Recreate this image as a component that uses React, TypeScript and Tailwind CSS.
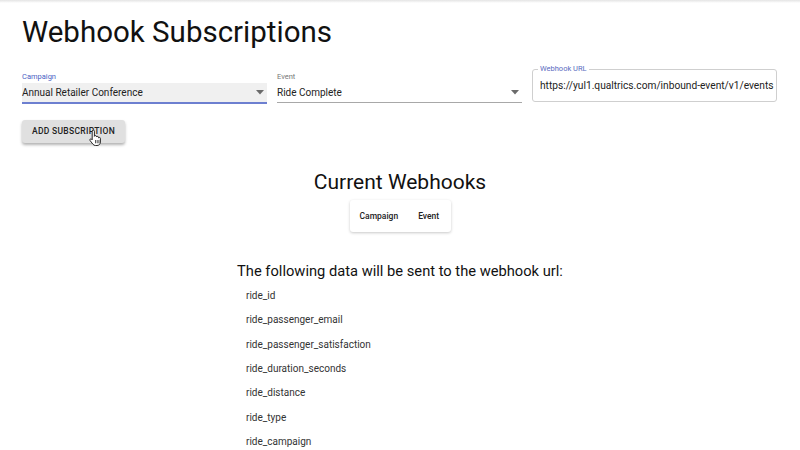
import React from "react";

const fields = [
  "ride_id",
  "ride_passenger_email",
  "ride_passenger_satisfaction",
  "ride_duration_seconds",
  "ride_distance",
  "ride_type",
  "ride_campaign",
];

function Arrow() {
  return (
    <svg width="8" height="5" viewBox="0 0 8 5" className="shrink-0">
      <path d="M0 0 L8 0 L4 4.5 Z" fill="#6b6b6b" />
    </svg>
  );
}

function HandCursor() {
  return (
    <svg
      width="13"
      height="16"
      viewBox="0 0 13 16"
      className="absolute left-[89px] top-[130px]"
    >
      <path
        d="M3.2 1.2c0-.7.5-1.1 1.1-1.1s1.1.4 1.1 1.1V6.3c.2-.5.6-.7 1.1-.7.6 0 1 .4 1 1v.4c.2-.4.6-.6 1-.6.6 0 1 .4 1 1v.5c.2-.3.5-.5.9-.5.6 0 1 .4 1 1V12c0 2-1.4 3.5-3.4 3.5H6.4c-1 0-1.9-.5-2.5-1.3L1.1 10.6c-.4-.5-.3-1.1.1-1.5.4-.4 1.1-.3 1.5.1l.5.6V1.2z"
        fill="#ffffff"
        stroke="#111"
        strokeWidth="0.9"
        strokeLinejoin="round"
      />
      <path d="M6.5 10v3.3M8.2 10v3.3M9.9 10v3.3" stroke="#111" strokeWidth="0.7" />
    </svg>
  );
}

export default function App() {
  return (
    <div
      className="relative w-[800px] h-[450px] overflow-hidden bg-white text-[#212121]"
      style={{ fontFamily: "Roboto, 'Liberation Sans', sans-serif" }}
    >
      <div className="absolute left-0 right-0 top-0 h-[3px] bg-gradient-to-b from-[#e4e4e4] to-white" />
      <div className="px-[22px] pt-[15px]">
        <h1 className="text-[29.5px] leading-[35px] font-normal text-[#111]">
          Webhook Subscriptions
        </h1>

        <div className="mt-[21px] flex items-start gap-[10px] pr-px">
          <div className="w-[245px] flex flex-col">
            <div className="h-[12px] text-[7.5px] leading-[12px] text-[#4b5fc4]">
              Campaign
            </div>
            <div className="h-[19px] bg-[#f0f0f0] flex items-center pr-[3px] text-[10px] text-[#222] border-b-2 border-[#6d7fd0] box-content">
              <span className="flex-1">Annual Retailer Conference</span>
              <Arrow />
            </div>
          </div>

          <div className="w-[245px] flex flex-col">
            <div className="h-[12px] text-[7.5px] leading-[12px] text-[#777]">
              Event
            </div>
            <div className="h-[19px] flex items-center pr-[3px] text-[10px] text-[#222] border-b border-[#a8a8a8] box-content">
              <span className="flex-1">Ride Complete</span>
              <Arrow />
            </div>
          </div>

          <div className="relative flex-1 mt-[-2px] h-[33px] border border-[#cfcfcf] rounded-[3px]">
            <span className="absolute left-[5px] top-[-6px] px-[2px] bg-white text-[7.5px] leading-[10px] text-[#5a6bc0] whitespace-nowrap">
              Webhook URL
            </span>
            <div className="h-full flex items-center pl-[7px] overflow-hidden">
              <span className="text-[10.2px] text-[#222] whitespace-nowrap">
                https://yul1.qualtrics.com/inbound-event/v1/events
              </span>
            </div>
          </div>
        </div>

        <button className="mt-[16px] w-[103px] h-[23px] rounded-[3px] bg-[#e0e0e0] shadow-[0_2px_3px_rgba(0,0,0,0.3)] text-[8.5px] font-medium tracking-[0.3px] text-[#222] flex items-center justify-center">
          ADD SUBSCRIPTION
        </button>
      </div>

      <HandCursor />

      <div className="flex flex-col items-center mt-[27px]">
        <h2 className="text-[21px] leading-[25px] text-[#111]">Current Webhooks</h2>
        <div className="mt-[5px] w-[101px] h-[32px] rounded-[3px] bg-white shadow-[0_1px_3px_rgba(0,0,0,0.22)] flex items-center gap-[20px] pl-[10px] text-[8.5px] font-medium text-[#222]">
          <span>Campaign</span>
          <span>Event</span>
        </div>

        <h3 className="mt-[30px] text-[14.7px] leading-[18px] text-[#111]">
          The following data will be sent to the webhook url:
        </h3>
        <ul className="mt-[3px] w-[308px]">
          {fields.map((f) => (
            <li key={f} className="h-[24.45px] flex items-center text-[10px] text-[#333]">
              {f}
            </li>
          ))}
        </ul>
      </div>
    </div>
  );
}
